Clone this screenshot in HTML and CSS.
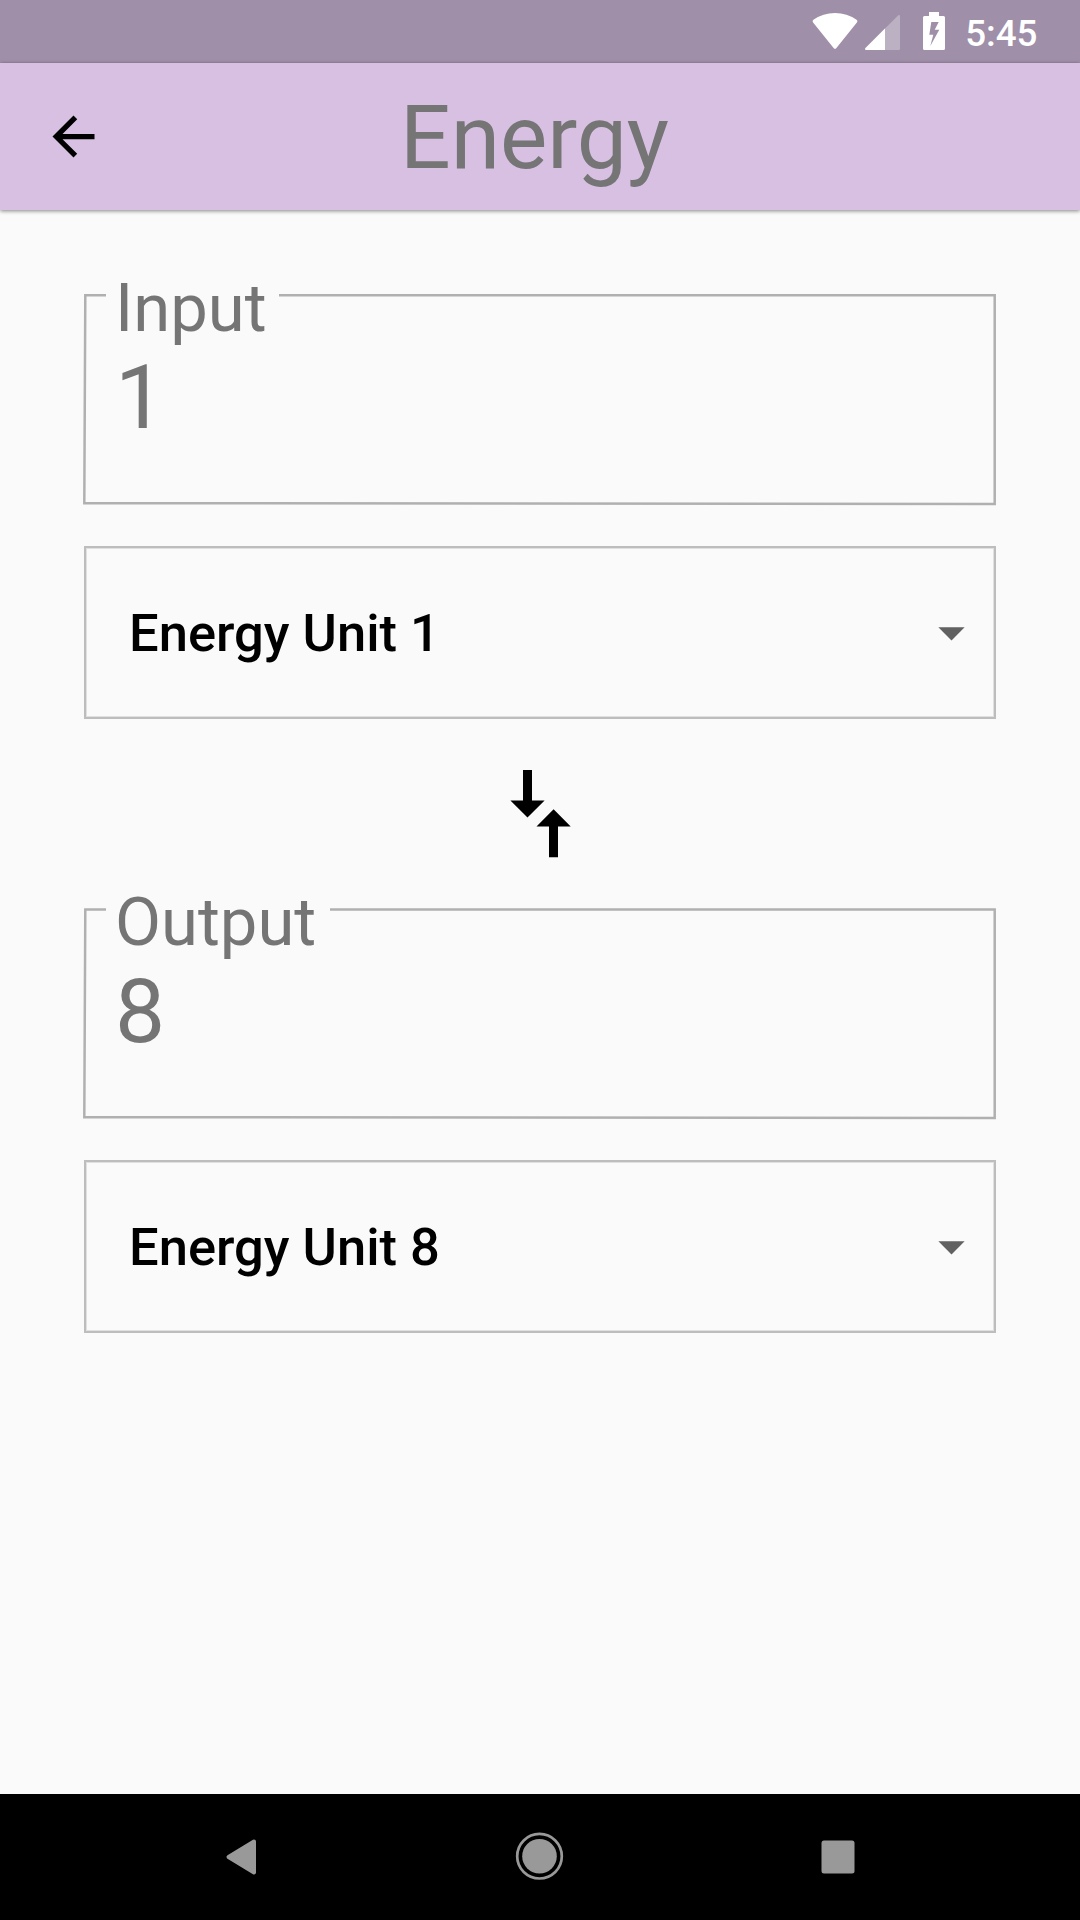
FILE: index.html
```html
<!DOCTYPE html>
<html lang="en">
<head>
<meta charset="utf-8">
<title>Energy</title>
<link rel="stylesheet" href="styles.css">
</head>
<body>
<div class="status-bar">
  <svg class="status-icons" width="140" height="63" viewBox="810 0 140 63" fill="#fff">
    <path d="M813.1 22.4Q811.8 20.9 813.4 19.8Q823 13 835 13Q847 13 856.600 19.8Q858.2 20.9 856.900 22.4L836.400 48Q835 49.700 833.600 48Z"/>
    <path d="M898.300 15.300L865.500 48.100Q864.300 50 866.300 50H898.500Q900 50 900 48.500V16Q899.600 14.200 898.300 15.300Z" fill-opacity=".3"/>
    <path d="M885 28.600L865.500 48.100Q864.300 50 866.300 50H885Z"/>
    <path fill-rule="evenodd" d="M929 12H939V16H943.500Q945 16 945 17.500V48.500Q945 50 943.500 50H924.500Q923 50 923 48.500V17.500Q923 16 924.500 16H929ZM931.300 22L929.300 34.700H933.300L930.300 46L939.300 29.700H934.700L938.700 22Z"/>
  </svg>
  <span class="clock">5:45</span>
</div>
<header class="app-bar">
  <svg class="back" width="63" height="63" viewBox="0 0 24 24"><path d="M20 11H7.830l5.590-5.590L12 4l-8 8 8 8 1.410-1.410L7.830 13H20v-2z"/></svg>
  <h1 class="title">Energy</h1>
</header>
<main class="content">
  <section class="field">
    <svg class="outline" width="918" height="214" viewBox="81 292 918 214"><path d="M106 295.300H85.300L84.300 503.200L994.700 503.900V295.300H279"/></svg>
    <div class="label">Input</div>
    <div class="value">1</div>
  </section>
  <div class="dropdown">
    <span>Energy Unit 1</span>
    <svg width="63" height="63" viewBox="0 0 24 24"><path d="M7 10l5 5 5-5z"/></svg>
  </div>
  <div class="swap">
    <svg width="60" height="90" viewBox="510 769 60 90" overflow="visible"><path d="M523 770H532V800.500H544.600L527.500 817.600L510.400 800.500H523ZM553.600 809.300L570.700 826.400H558V857.200H549V826.400H536.500Z"/></svg>
  </div>
  <section class="field">
    <svg class="outline" width="918" height="214" viewBox="81 292 918 214"><path d="M106 295.500H85.300L84.300 503.200L994.700 504V295.500H330"/></svg>
    <div class="label">Output</div>
    <div class="value">8</div>
  </section>
  <div class="dropdown">
    <span>Energy Unit 8</span>
    <svg width="63" height="63" viewBox="0 0 24 24"><path d="M7 10l5 5 5-5z"/></svg>
  </div>
</main>
<nav class="nav-bar">
  <svg width="36" height="48" viewBox="223 1832 36 48"><path d="M227.500 1857L253 1872.500V1841.500Z" stroke-width="4" stroke-linejoin="round" transform="translate(1 0)"/></svg>
  <svg width="50" height="48" viewBox="515 1832 50 48"><circle cx="539.500" cy="1856.200" r="17.300" stroke="none"/><circle cx="539.500" cy="1856.200" r="22.300" fill="none" stroke-width="2.700"/></svg>
  <svg width="36" height="48" viewBox="820 1832 36 48"><rect x="821.500" y="1840.500" width="33" height="33" rx="2.500" stroke="none"/></svg>
</nav>
</body>
</html>
```
FILE: styles.css
```css
* { box-sizing: border-box; }
body {
  margin: 0;
  height: 1920px;
  display: flex;
  flex-direction: column;
  background: #fafafa;
  font-family: Roboto, sans-serif;
  overflow: hidden;
}
svg { display: block; flex: none; }

.status-bar {
  height: 63px;
  flex: none;
  display: flex;
  justify-content: flex-end;
  align-items: center;
  gap: 15.5px;
  padding-right: 42.5px;
  background: #a08fa9;
  color: #fff;
}
.clock {
  font-size: 36.75px;
  font-weight: 500;
  line-height: 43px;
  padding-top: 4px;
}

.app-bar {
  height: 147px;
  flex: none;
  display: grid;
  grid-template-columns: 63px 1fr 63px;
  align-items: center;
  padding: 0 42px;
  background: #d8c0e3;
  box-shadow: 0 1px 4px rgba(0, 0, 0, .48);
}
.title {
  margin: 0;
  padding: 2px 11px 0 0;
  text-align: center;
  font-size: 89.25px;
  font-weight: 400;
  line-height: 104px;
  color: #757575;
}

.content {
  flex: 1;
  padding: 63px 84px 0;
}
.field {
  position: relative;
  height: 273px;
  padding-left: 31px;
  color: #757575;
}
.outline {
  position: absolute;
  left: -3px;
  top: 19px;
  fill: none;
  stroke: #b0b0b0;
  stroke-width: 2.5px;
}
.label {
  font-size: 66.94px;
  line-height: 70px;
}
.value {
  margin-top: 3px;
  font-size: 89.25px;
  line-height: 104px;
}
.dropdown {
  height: 173px;
  display: flex;
  align-items: center;
  justify-content: space-between;
  padding: 0 11px 0 43px;
  border: 2px solid #bdbdbd;
  box-shadow: inset 0 0 0 1px #e0e0e0;
  font-size: 52.5px;
  font-weight: 500;
  color: #000;
}
.dropdown svg { fill: #616161; }
.swap {
  height: 168px;
  display: flex;
  justify-content: center;
  padding-top: 50px;
}

.nav-bar {
  height: 126px;
  flex: none;
  display: flex;
  justify-content: space-between;
  padding: 38px 224px 0 223px;
  background: #000;
  fill: #999;
  stroke: #999;
}
```
